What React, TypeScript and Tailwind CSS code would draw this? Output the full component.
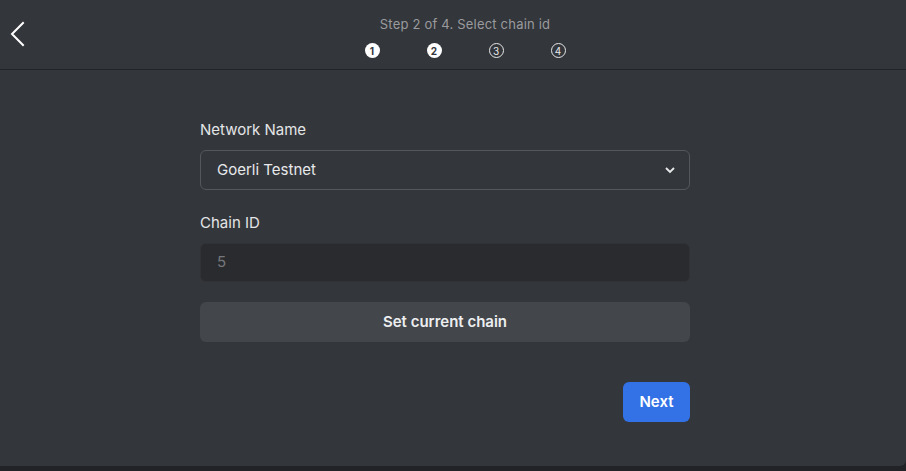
import React from "react";

function StepCircle({ n, filled }: { n: number; filled: boolean }) {
  return filled ? (
    <div className="w-[15px] h-[15px] rounded-full bg-white text-[#33363b] text-[10px] font-bold flex items-center justify-center leading-none">
      {n}
    </div>
  ) : (
    <div className="w-[15px] h-[15px] rounded-full border border-[#e8e8e8] text-[#e8e8e8] text-[10px] flex items-center justify-center leading-none">
      {n}
    </div>
  );
}

export default function App() {
  return (
    <div
      className="w-[906px] h-[471px] bg-[#222327] overflow-hidden"
      style={{ fontFamily: "Inter, 'Noto Sans', sans-serif" }}
    >
      <div className="h-[466px] bg-[#33363b] rounded-br-[6px] flex flex-col">
        <div className="h-[70px] border-b border-[#222327] flex items-start relative">
          <button className="absolute left-[9px] top-[21px] text-white">
            <svg width="16" height="26" viewBox="0 0 16 26" fill="none">
              <path d="M14 2 L3 13 L14 24" stroke="#ffffff" strokeWidth="2" strokeLinecap="square" />
            </svg>
          </button>
          <div className="flex-1 flex flex-col items-center pt-[15px]">
            <div className="text-[13px] text-[#9a9b9e] leading-[18px] ml-[24px] tracking-[0.2px]">Step 2 of 4. Select chain id</div>
            <div className="flex gap-[47px] mt-[10px] ml-[24px]">
              <StepCircle n={1} filled />
              <StepCircle n={2} filled />
              <StepCircle n={3} filled={false} />
              <StepCircle n={4} filled={false} />
            </div>
          </div>
        </div>
        <div className="w-[490px] ml-[200px] pt-[50px] flex flex-col">
          <label className="text-[15px] text-[#e4e5e7] leading-[20px]">Network Name</label>
          <div className="mt-[10px] h-[40px] rounded-[6px] border border-[#54575c] flex items-center justify-between pl-[16px] pr-[13px]">
            <span className="text-[15px] text-[#e8e9eb]">Goerli Testnet</span>
            <svg width="12" height="8" viewBox="0 0 12 8" fill="none">
              <path d="M2 2 L6 6 L10 2" stroke="#e8e9eb" strokeWidth="1.8" />
            </svg>
          </div>
          <label className="mt-[23px] text-[15px] text-[#e4e5e7] leading-[20px]">Chain ID</label>
          <div className="mt-[10px] h-[39px] rounded-[6px] border border-[#303236] bg-[#2a2b2f] flex items-center pl-[16px]">
            <span className="text-[15px] text-[#76777a]">5</span>
          </div>
          <button className="mt-[20px] h-[40px] rounded-[6px] bg-[#43464b] text-[15px] font-semibold text-[#eceef0]">
            Set current chain
          </button>
          <div className="flex justify-end mt-[40px]">
            <button className="w-[67px] h-[40px] rounded-[6px] bg-[#3271e6] text-[15px] font-semibold text-white">
              Next
            </button>
          </div>
        </div>
      </div>
    </div>
  );
}
